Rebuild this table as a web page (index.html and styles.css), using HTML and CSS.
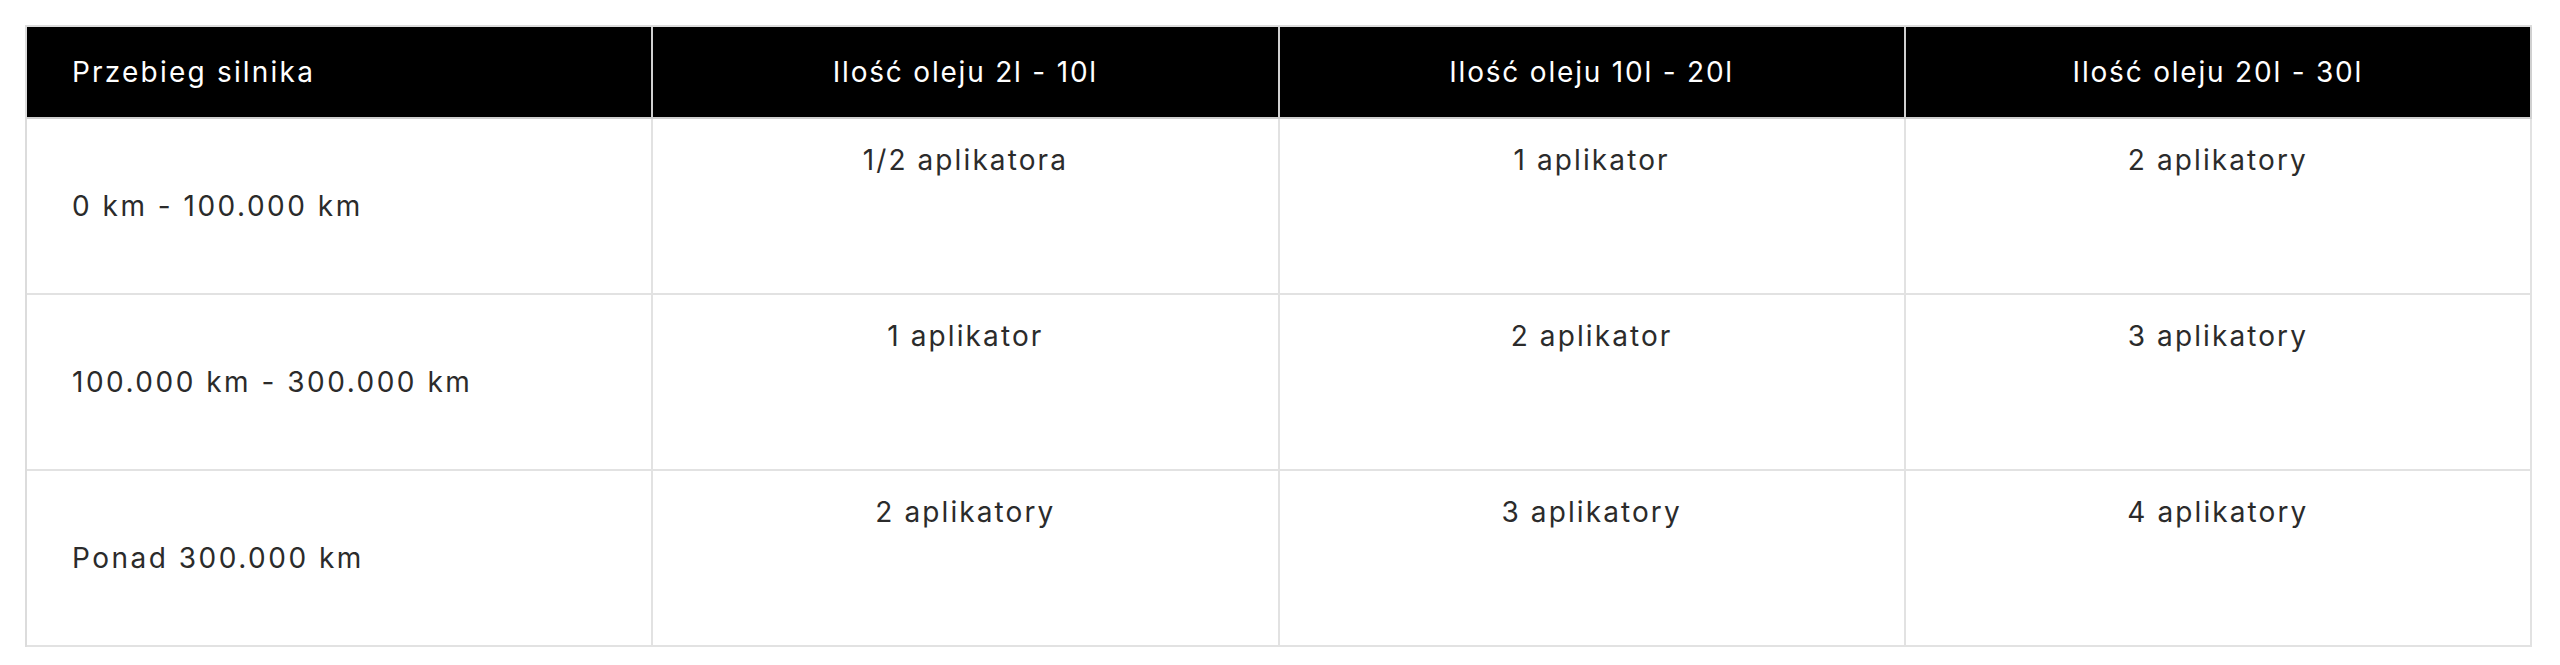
FILE: index.html
```html
<!DOCTYPE html>
<html lang="pl">
<head>
<meta charset="utf-8">
<title>Tabela aplikatorów</title>
<link rel="stylesheet" href="styles.css">
</head>
<body>
<div class="wrap">
  <table class="dose-table">
    <thead>
      <tr>
        <th class="first">Przebieg silnika</th>
        <th>Ilość oleju 2l - 10l</th>
        <th>Ilość oleju 10l - 20l</th>
        <th>Ilość oleju 20l - 30l</th>
      </tr>
    </thead>
    <tbody>
      <tr>
        <td class="first">0 km - 100.000 km</td>
        <td>1/2 aplikatora</td>
        <td>1 aplikator</td>
        <td>2 aplikatory</td>
      </tr>
      <tr>
        <td class="first">100.000 km - 300.000 km</td>
        <td>1 aplikator</td>
        <td>2 aplikator</td>
        <td>3 aplikatory</td>
      </tr>
      <tr>
        <td class="first">Ponad 300.000 km</td>
        <td>2 aplikatory</td>
        <td>3 aplikatory</td>
        <td>4 aplikatory</td>
      </tr>
    </tbody>
  </table>
</div>
</body>
</html>
```
FILE: styles.css
```css
html, body {
  margin: 0;
  padding: 0;
  background: #ffffff;
}

.wrap {
  padding: 25px 28px 0 25px;
}

.dose-table {
  width: 100%;
  table-layout: fixed;
  border-collapse: separate;
  border-spacing: 0;
  border-top: 2px solid #dcdcdc;
  border-left: 2px solid #dcdcdc;
  font-family: "Inter", "Liberation Sans", sans-serif;
  font-size: 28px;
  letter-spacing: 2.1px;
  color: #2b2b2b;
}

.dose-table th,
.dose-table td {
  box-sizing: border-box;
  border-right: 2px solid #e2e2e2;
  border-bottom: 2px solid #e2e2e2;
  text-align: center;
  font-weight: 400;
  line-height: 40px;
}

.dose-table th {
  background: #000000;
  color: #ffffff;
  height: 92px;
  padding: 0 20px;
  vertical-align: middle;
  letter-spacing: 1.8px;
  border-right-color: #d0d0d0;
  border-bottom-color: #d0d0d0;
}

.dose-table td {
  height: 176px;
  padding: 21px 20px 0;
  vertical-align: top;
}

.dose-table .first {
  text-align: left;
  padding-left: 45px;
}

.dose-table th.first {
  letter-spacing: 2.2px;
}

.dose-table td.first {
  padding-top: 0;
  vertical-align: middle;
  letter-spacing: 2.5px;
}
```
